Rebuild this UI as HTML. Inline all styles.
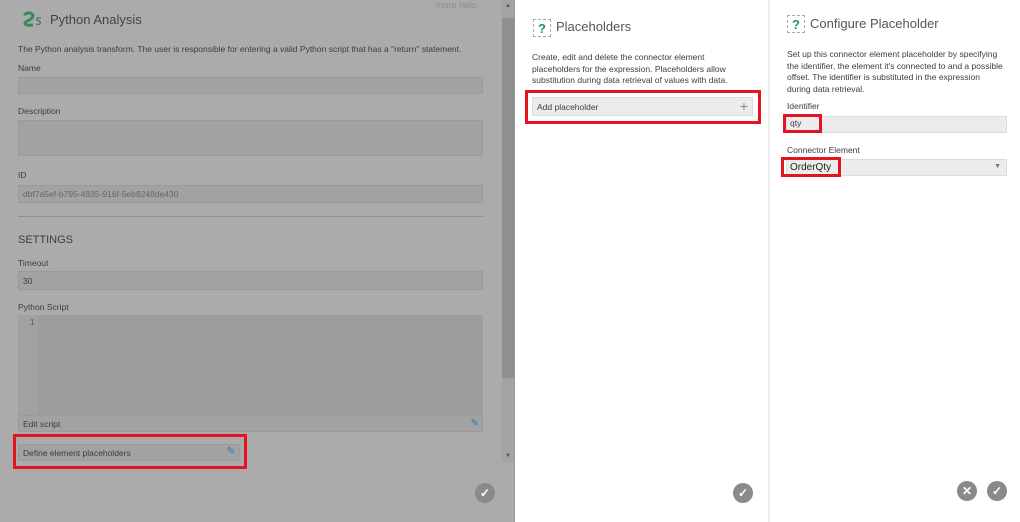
<!DOCTYPE html>
<html><head><style>
*{box-sizing:border-box;margin:0;padding:0}
body{width:1020px;height:522px;overflow:hidden;background:#fff;font-family:"Liberation Sans",sans-serif;position:relative}
.a{position:absolute}
.l{font-size:8.5px;color:#3d3d3d}
.f{background:#a2a2a2;border:1px solid #9a9a9a}
.rf{background:#ececec;border:1px solid #dcdcdc}
.red{border:3px solid #e3141f}
.chk{width:20px;height:20px;border-radius:50%;background:#8a8a8a;color:#fff;font-size:12px;text-align:center;line-height:20px;font-weight:bold}
.q{width:18px;height:18px;border:1px dashed #aaa;color:#1f9a5a;font-weight:bold;font-size:13px;text-align:center;line-height:17px}
</style></head><body>
<div class="a" style="left:0;top:0;width:515px;height:522px;background:#ababab"></div>
<div class="a" style="left:514px;top:0;width:1px;height:522px;background:#999"></div>
<div class="a" style="left:502px;top:0;width:12px;height:462px;background:#a3a3a3"></div>
<div class="a" style="left:502px;top:18px;width:12px;height:360px;background:#8f8f8f"></div>
<div class="a" style="left:505px;top:3px;font-size:6px;color:#555">▲</div>
<div class="a" style="left:505px;top:453px;font-size:6px;color:#555">▼</div>
<div class="a" style="left:436px;top:0;font-size:9px;color:#8c8c8c">more help</div>
<svg class="a" style="left:22px;top:10px" width="22" height="20" viewBox="0 0 22 20"><path d="M2 5 Q7 1 11 5 Q11 9 5 11 L3 13 Q3 16 11 15" stroke="#3a8a5a" stroke-width="3" fill="none"/><path d="M19 8 Q14 7 15 10 Q19 11 18 14 Q16 15 14 14" stroke="#5a7a6a" stroke-width="1.5" fill="none"/></svg>
<div class="a" style="left:50px;top:12px;font-size:13px;color:#444">Python Analysis</div>
<div class="a l" style="left:18px;top:44px">The Python analysis transform. The user is responsible for entering a valid Python script that has a "return" statement.</div>
<div class="a l" style="left:18px;top:63px">Name</div>
<div class="a f" style="left:18px;top:77px;width:465px;height:17px"></div>
<div class="a l" style="left:18px;top:106px">Description</div>
<div class="a f" style="left:18px;top:120px;width:465px;height:36px"></div>
<div class="a l" style="left:18px;top:170px">ID</div>
<div class="a f l" style="left:18px;top:185px;width:465px;height:18px;padding:3px 4px;color:#666">dbf7a5ef-b795-4935-916f-5eb8248de430</div>
<div class="a" style="left:18px;top:216px;width:465px;height:1px;background:#8f8f8f"></div>
<div class="a" style="left:18px;top:234px;font-size:11px;color:#3d3d3d">SETTINGS</div>
<div class="a l" style="left:18px;top:258px">Timeout</div>
<div class="a f l" style="left:18px;top:271px;width:465px;height:19px;padding:4px 4px">30</div>
<div class="a l" style="left:18px;top:302px">Python Script</div>
<div class="a" style="left:18px;top:315px;width:465px;height:100px;background:#a1a1a1"></div>
<div class="a" style="left:38px;top:315px;width:445px;height:100px;background:#9d9d9d"></div>
<div class="a" style="left:30px;top:318px;font-size:8px;color:#555">1</div>
<div class="a f l" style="left:18px;top:415px;width:465px;height:17px;padding:3px 4px">Edit script<span style="position:absolute;right:3px;top:2px;color:#1e7fc0;font-size:10px">✎</span></div>
<div class="a red" style="left:13px;top:434px;width:234px;height:35px"></div>
<div class="a f l" style="left:18px;top:444px;width:222px;height:17px;padding:3px 4px">Define element placeholders<span style="position:absolute;right:4px;top:1px;color:#1e7fc0;font-size:10px">✎</span></div>
<div class="a chk" style="left:475px;top:483px">✓</div>

<div class="a" style="left:768px;top:0;width:2px;height:522px;background:#eee"></div>
<div class="a q" style="left:533px;top:19px">?</div>
<div class="a" style="left:556px;top:19px;font-size:13px;color:#555">Placeholders</div>
<div class="a l" style="left:532px;top:52px;line-height:11.5px;width:210px">Create, edit and delete the connector element placeholders for the expression. Placeholders allow substitution during data retrieval of values with data.</div>
<div class="a red" style="left:525px;top:90px;width:236px;height:34px"></div>
<div class="a rf l" style="left:532px;top:97px;width:221px;height:19px;padding:4px 4px">Add placeholder<span style="position:absolute;right:4px;top:0;font-size:14px;color:#888">+</span></div>
<div class="a chk" style="left:733px;top:483px">✓</div>

<div class="a q" style="left:787px;top:15px">?</div>
<div class="a" style="left:810px;top:16px;font-size:13px;color:#555">Configure Placeholder</div>
<div class="a l" style="left:787px;top:49px;line-height:11.5px;width:240px;white-space:nowrap">Set up this connector element placeholder by specifying<br>the identifier, the element it's connected to and a possible<br>offset. The identifier is substituted in the expression<br>during data retrieval.</div>
<div class="a l" style="left:787px;top:101px">Identifier</div>
<div class="a rf" style="left:786px;top:116px;width:221px;height:17px"></div>
<div class="a red" style="left:783px;top:114px;width:39px;height:19px"></div>
<div class="a l" style="left:790px;top:118px">qty</div>
<div class="a l" style="left:787px;top:145px">Connector Element</div>
<div class="a rf" style="left:786px;top:159px;width:221px;height:17px"><span style="position:absolute;right:5px;top:3px;font-size:7px;color:#777">▼</span></div>
<div class="a red" style="left:781px;top:157px;width:60px;height:20px"></div>
<div class="a" style="left:790px;top:162px;font-size:10px;color:#222">OrderQty</div>
<div class="a chk" style="left:957px;top:481px">✕</div>
<div class="a chk" style="left:987px;top:481px">✓</div>
</body></html>
